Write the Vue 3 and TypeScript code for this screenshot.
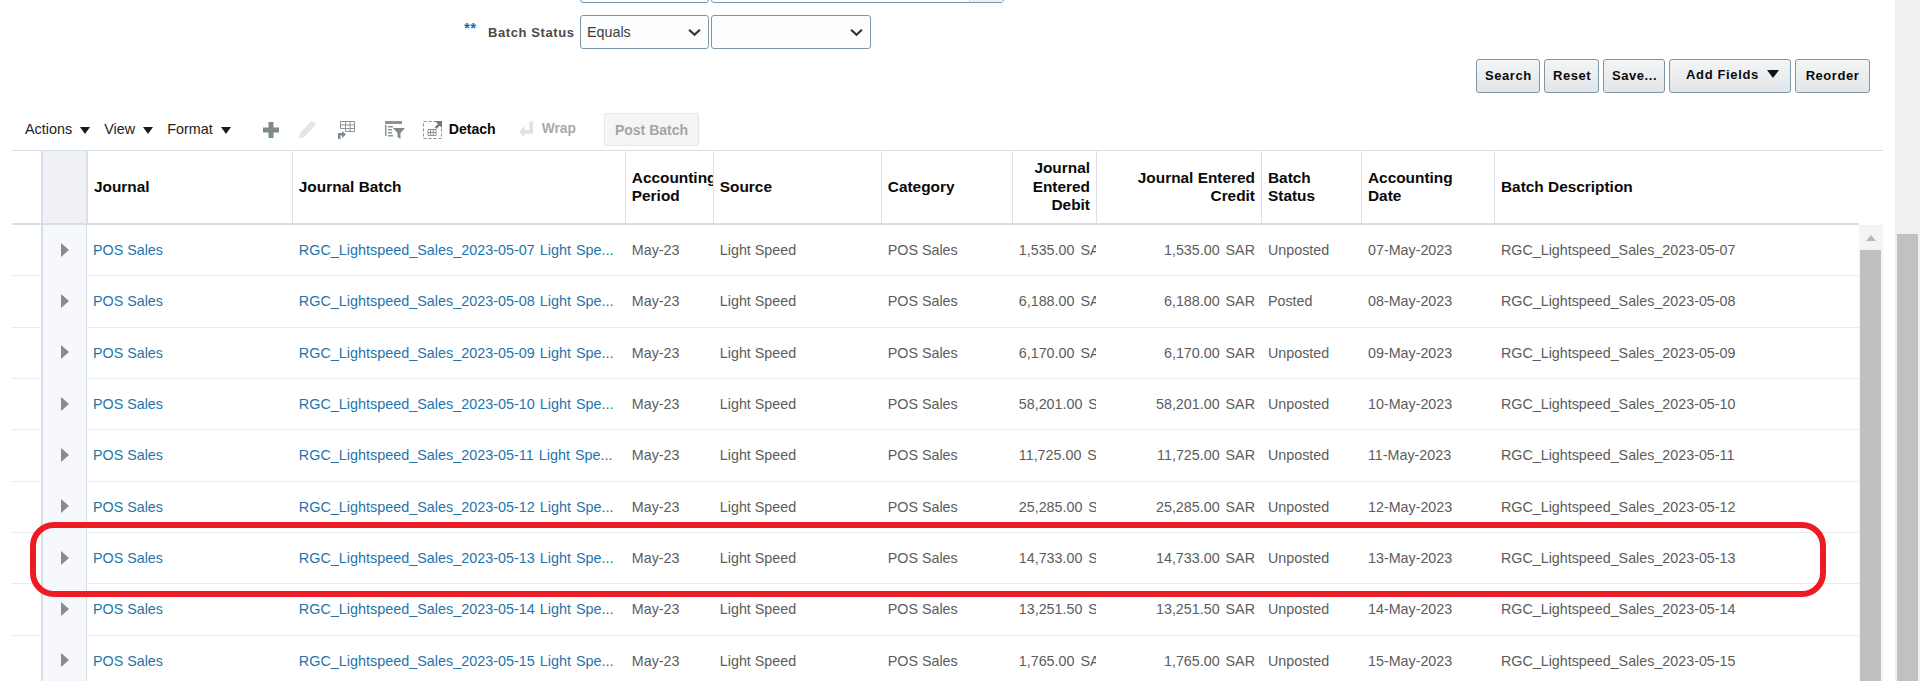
<script setup lang="ts">
interface Row {
  date: string
  amount: string
  status: string
}

const rows: Row[] = [
  { date: '07', amount: '1,535.00', status: 'Unposted' },
  { date: '08', amount: '6,188.00', status: 'Posted' },
  { date: '09', amount: '6,170.00', status: 'Unposted' },
  { date: '10', amount: '58,201.00', status: 'Unposted' },
  { date: '11', amount: '11,725.00', status: 'Unposted' },
  { date: '12', amount: '25,285.00', status: 'Unposted' },
  { date: '13', amount: '14,733.00', status: 'Unposted' },
  { date: '14', amount: '13,251.50', status: 'Unposted' },
  { date: '15', amount: '1,765.00', status: 'Unposted' },
]

const actions: string[] = ['Search', 'Reset', 'Save...']
const menus: string[] = ['Actions', 'View', 'Format']
</script>

<template>
  <div class="page">
    <main class="main">
      <section class="form">
        <div class="form-sliver">
          <div class="select op"></div>
          <div class="lov"><span class="lov-btn"></span></div>
        </div>
        <div class="form-row">
          <span class="req">**</span>
          <label class="form-label">Batch Status</label>
          <div class="select op">
            <span>Equals</span>
            <svg class="chev" viewBox="0 0 12 8"><path d="M1 1.5 6 6.2 11 1.5" /></svg>
          </div>
          <div class="select val">
            <svg class="chev" viewBox="0 0 12 8"><path d="M1 1.5 6 6.2 11 1.5" /></svg>
          </div>
        </div>
      </section>

      <div class="actions">
        <button v-for="a in actions" :key="a" class="btn">{{ a }}</button>
        <button class="btn btn-add"><span class="add-label">Add Fields</span><i class="tri-add"></i></button>
        <button class="btn">Reorder</button>
      </div>

      <div class="toolbar">
        <div class="menus">
          <span v-for="m in menus" :key="m" class="menu">{{ m }}<i class="tri"></i></span>
        </div>
        <svg class="ico i-plus" viewBox="0 0 16 16"><path fill="#7f8a90" d="M5.500 0h5v5.500h5.500v5h-5.500v5.500h-5v-5.500h-5.500v-5h5.500z" /></svg>
        <svg class="ico i-pencil" viewBox="0 0 20 20"><path fill="#e3e5e6" d="M14.500.8 19 4.800 6.500 18 1 19.500 2 13.800z" /></svg>
        <svg class="ico i-freeze" viewBox="0 0 18 18">
          <path fill="none" stroke="#8a9399" stroke-width="1" d="M3.500 .5h14v10h-9M3.500 .5v7M8.500 .5v10M13 .5v10M3.500 4h14M3.500 7.500h14" />
          <path fill="#7f8a90" d="M1 18v-6h4v-2l4 3.500-4 3.500v-2.500h-1.500v3.500z" />
        </svg>
        <svg class="ico i-filter" viewBox="0 0 20 18">
          <path fill="#8a9399" d="M0 0h17v3h-17zM0 4h1.500v11h-1.500zM3 5h5v1.500h-5zM3 8h4v1.500h-4zM3 11h4v1.500h-4zM3 14h5v1.500h-5z" />
          <path fill="#7f8a90" d="M8 7h12l-4.500 5v6l-3-2v-4z" />
        </svg>
        <svg class="ico i-detach" viewBox="0 0 20 19">
          <rect x=".5" y="1.500" width="18" height="17" fill="none" stroke="#8a9399" stroke-dasharray="3 2" />
          <path fill="none" stroke="#8a9399" d="M5 9.500h8v6h-8zM5 12.500h8M7.700 9.500v6M10.300 9.500v6" />
          <path fill="#6f7a80" d="M12 1h7v7l-2.300-2.300-3.200 3.200-1.700-1.700 3.200-3.200z" />
        </svg>
        <span class="tool-text detach">Detach</span>
        <svg class="ico i-wrap" viewBox="0 0 16 17"><path fill="#dfe1e3" d="M11 0h4v13h-9v4l-6-6 6-6v4h5z" /></svg>
        <span class="tool-text wrap">Wrap</span>
        <button class="post">Post Batch</button>
      </div>

      <div class="table">
        <div class="grid head">
          <div class="cell gutter"></div>
          <div class="cell sel-head"></div>
          <div class="cell th">Journal</div>
          <div class="cell th">Journal Batch</div>
          <div class="cell th clip">Accounting Period</div>
          <div class="cell th">Source</div>
          <div class="cell th">Category</div>
          <div class="cell th right">Journal Entered Debit</div>
          <div class="cell th right">Journal Entered Credit</div>
          <div class="cell th">Batch Status</div>
          <div class="cell th">Accounting Date</div>
          <div class="cell th">Batch Description</div>
          <div class="head-end"></div>
        </div>
        <div class="body">
          <div class="rows">
            <div v-for="r in rows" :key="r.date" class="grid row">
              <div class="cell gutter"></div>
              <div class="cell sel"><i class="disclose"></i></div>
              <div class="cell link journal">POS Sales</div>
              <div class="cell link batch">RGC_Lightspeed_Sales_2023-05-{{ r.date }} Light Spe...</div>
              <div class="cell">May-23</div>
              <div class="cell">Light Speed</div>
              <div class="cell">POS Sales</div>
              <div class="cell debit amount">{{ r.amount }} SAR</div>
              <div class="cell right amount">{{ r.amount }} SAR</div>
              <div class="cell">{{ r.status }}</div>
              <div class="cell">{{ r.date }}-May-2023</div>
              <div class="cell">RGC_Lightspeed_Sales_2023-05-{{ r.date }}</div>
            </div>
          </div>
          <div class="vbar">
            <div class="vbar-up"><i class="tri-up"></i></div>
            <div class="vbar-thumb"></div>
          </div>
        </div>
      </div>

      <div class="callout"></div>
    </main>
    <aside class="page-scroll"><div class="page-thumb"></div></aside>
  </div>
</template>

<style scoped>
.page {
  display: flex;
  width: 1920px;
  height: 681px;
  overflow: hidden;
  background: #fff;
  font-family: "Liberation Sans", Arial, sans-serif;
  color: #5a5a5a;
}
.main {
  position: relative;
  width: 1895px;
  flex: none;
}
.page-scroll {
  width: 25px;
  flex: none;
  background: #f1f1f1;
  padding: 234px 2px 0;
  box-sizing: border-box;
}
.page-thumb {
  height: 447px;
  background: #c1c1c1;
}

/* search form */
.form-sliver {
  display: flex;
  gap: 2px;
  height: 3px;
  padding-left: 580px;
  overflow: hidden;
  align-items: flex-end;
}
.form-sliver .select {
  height: 30px;
  flex: none;
}
.lov {
  width: 293px;
  height: 30px;
  border: 1px solid #7e97a8;
  border-radius: 3px;
  box-sizing: border-box;
  display: flex;
  justify-content: flex-end;
}
.lov-btn {
  width: 33px;
  background: #eceef1;
  border-left: 1px solid #c5ced5;
}
.form-row {
  display: flex;
  align-items: center;
  gap: 2px;
  margin-top: 12px;
  height: 34px;
  padding-left: 464px;
}
.req {
  width: 22px;
  flex: none;
  color: #0a6fb8;
  font-weight: 700;
  font-size: 15px;
  align-self: flex-start;
  margin-top: 4px;
  letter-spacing: .3px;
}
.form-label {
  width: 90px;
  flex: none;
  font-size: 13px;
  font-weight: 700;
  letter-spacing: .6px;
  color: #4a4a4a;
  white-space: nowrap;
}
.select {
  height: 34px;
  box-sizing: border-box;
  border: 1px solid #7e97a8;
  border-radius: 3px;
  background: #fcfdfe;
  display: flex;
  align-items: center;
  justify-content: space-between;
  padding: 0 7px 0 6px;
  font-size: 14.3px;
  color: #3c3c3c;
}
.select.op {
  width: 129px;
}
.select.val {
  width: 160px;
  justify-content: flex-end;
}
.chev {
  width: 13px;
  height: 9px;
  fill: none;
  stroke: #333;
  stroke-width: 2;
}

/* search actions */
.actions {
  display: flex;
  justify-content: flex-end;
  gap: 4px;
  margin-top: 10px;
  padding-right: 25px;
}
.btn {
  height: 34px;
  box-sizing: border-box;
  border: 1px solid #7e97a8;
  border-radius: 3px;
  background: linear-gradient(#f3f5f6, #e3e6e9);
  font: 700 13px "Liberation Sans", Arial, sans-serif;
  letter-spacing: .55px;
  color: #0a0a0a;
  padding: 0 8px 2px;
}
.btn:nth-child(1) { width: 64px; }
.btn:nth-child(2) { width: 55px; }
.btn:nth-child(3) { width: 62px; }
.btn:nth-child(5) { width: 75px; }
.btn-add {
  width: 122px;
  display: flex;
  align-items: center;
  padding: 0 11px 4px 16px;
  justify-content: space-between;
  letter-spacing: .65px;
}
.tri-add {
  width: 0;
  height: 0;
  border-left: 6px solid transparent;
  border-right: 6px solid transparent;
  border-top: 8px solid #111;
}

/* toolbar */
.toolbar {
  display: flex;
  align-items: center;
  height: 33px;
  margin-top: 20px;
  padding-left: 25px;
  font-size: 14.4px;
}
.menus {
  display: flex;
  gap: 14px;
  margin-right: 32.5px;
}
.menu {
  display: flex;
  align-items: center;
  gap: 8px;
  color: #222;
  margin-bottom: 2px;
}
.tri {
  width: 0;
  height: 0;
  border-left: 5.5px solid transparent;
  border-right: 5.5px solid transparent;
  border-top: 7px solid #1a1a1a;
  margin-top: 3px;
}
.ico {
  flex: none;
  display: block;
}
.i-plus { width: 16px; height: 16px; margin-right: 18.5px; }
.i-pencil { width: 19px; height: 19px; margin-right: 20px; }
.i-freeze { width: 18px; height: 18px; margin-right: 30px; }
.i-filter { width: 20px; height: 18px; margin-right: 18px; }
.i-detach { width: 20px; height: 19px; margin-right: 6px; }
.i-wrap { width: 15px; height: 17px; margin-right: 8px; }
.tool-text {
  font-weight: 700;
  font-size: 14.1px;
  margin-bottom: 2px;
}
.detach {
  color: #0a0a0a;
  margin-right: 23px;
}
.wrap {
  color: #a9a9a9;
  font-size: 13.8px;
  margin-right: 28px;
}
.post {
  width: 95px;
  height: 33px;
  box-sizing: border-box;
  border: 1px solid #e4e7ea;
  border-radius: 2px;
  background: #f4f5f7;
  color: #a4a4a4;
  font: 700 14px "Liberation Sans", Arial, sans-serif;
  padding: 0;
}

/* table */
.table {
  margin: 4px 12px 0;
  border-top: 1px solid #d6dfe7;
}
.grid {
  display: grid;
  grid-template-columns: 29px 46px 204.8px 333px 88px 168px 131px 84.2px 165px 100px 133px 365px;
  font-size: 14.3px;
}
.head {
  grid-template-columns: 29px 46px 204.8px 333px 88px 168px 131px 84.2px 165px 100px 133px 365px 24px;
  height: 74px;
  box-sizing: border-box;
  padding-bottom: 2px;
  position: relative;
}
.head::after {
  content: "";
  position: absolute;
  left: 0;
  right: 24px;
  bottom: 0;
  height: 2px;
  background: #d6dfe7;
}
.head-end {
  background: #fff;
}
.cell {
  display: flex;
  align-items: center;
  padding: 0 7px;
  box-sizing: border-box;
  overflow: hidden;
  white-space: nowrap;
  min-width: 0;
}
.gutter {
  padding: 0;
}
.th {
  font-size: 15.4px;
  font-weight: 700;
  line-height: 18.4px;
  color: #0a0a0a;
  white-space: normal;
  border-left: 1px solid #d9e2e9;
  padding-left: 6px;
}
.th:last-of-type {
  border-right: 1px solid #d0d7dd;
}
.clip {
  padding-right: 0;
}
.right {
  justify-content: flex-end;
  text-align: right;
  padding-right: 6px;
}
.sel-head {
  background: #eff1f5;
  border-left: 2px solid #d6dfe7;
  border-right: 1px solid #d6dfe7;
  padding: 0;
}
.body {
  display: flex;
}
.rows {
  width: 1847px;
  flex: none;
}
.row {
  height: 51.33px;
  box-sizing: border-box;
  border-bottom: 1px solid #e9ecef;
  color: #5c5c5c;
}
.sel {
  background: #f6f8fc;
  border-left: 2px solid #d6dfe7;
  border-right: 1px solid #d6dfe7;
  padding: 0 0 0 18px;
  margin-bottom: -1px;
}
.disclose {
  width: 0;
  height: 0;
  border-top: 7px solid transparent;
  border-bottom: 7px solid transparent;
  border-left: 8px solid #8b8b8b;
  margin-top: -2px;
}
.link {
  color: #1f74ad;
}
.journal {
  padding-left: 6px;
}
.batch {
  word-spacing: 1px;
  font-size: 14.4px;
}
.amount {
  word-spacing: 2px;
}
.debit {
  padding-right: 0;
}
.vbar {
  width: 24px;
  flex: none;
  padding-left: 1px;
  padding-right: 2px;
  background: #f4f4f4;
  box-sizing: border-box;
}
.vbar-up {
  height: 25px;
  display: flex;
  justify-content: center;
  padding-top: 10px;
  box-sizing: border-box;
}
.tri-up {
  width: 0;
  height: 0;
  border-left: 5px solid transparent;
  border-right: 5px solid transparent;
  border-bottom: 6px solid #b5b5b5;
}
.vbar-thumb {
  height: 500px;
  background: #c0c0c0;
}

/* annotation drawn over the table */
.callout {
  position: absolute;
  left: 30px;
  top: 522px;
  width: 1796px;
  height: 75px;
  box-sizing: border-box;
  border: 6px solid #ed1c24;
  border-radius: 24px;
  pointer-events: none;
}
</style>
